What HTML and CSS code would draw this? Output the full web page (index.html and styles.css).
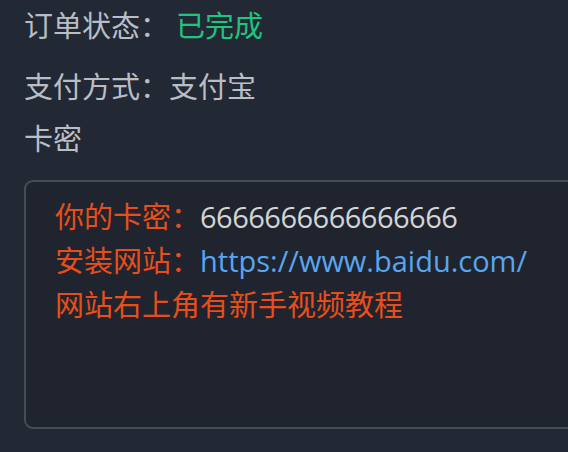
FILE: index.html
```html
<!DOCTYPE html>
<html lang="zh-CN">
<head>
<meta charset="utf-8">
<title>订单详情</title>
<link rel="stylesheet" href="styles.css">
</head>
<body>
<div class="page">
  <div class="row row-status">
    <span class="label">订单状态：</span>
    <span class="tag-done">已完成</span>
  </div>
  <div class="row row-pay">
    <span class="label">支付方式：</span>
    <span class="value">支付宝</span>
  </div>
  <div class="row row-card">
    <span class="label">卡密</span>
  </div>
  <div class="card-box">
    <div class="line"><span class="warn">你的卡密：</span><span class="code">6666666666666666</span></div>
    <div class="line"><span class="warn">安装网站：</span><span class="link">https://www.baidu.com/</span></div>
    <div class="line"><span class="warn">网站右上角有新手视频教程</span></div>
  </div>
</div>
</body>
</html>
```

FILE: styles.css
```css
html, body {
  margin: 0;
  padding: 0;
  background: #232934;
  overflow: hidden;
}

.page {
  padding: 4px 0 0 24px;
  font-family: "Open Sans", "Noto Sans CJK SC", sans-serif;
  font-size: 29px;
  line-height: 44px;
  color: #b9bec6;
  width: 600px;
}

.row {
  display: flex;
  align-items: center;
  height: 44px;
  white-space: nowrap;
}

.row-pay {
  margin-top: 17px;
}

.row-card {
  margin-top: 8px;
}

.label {
  color: #b9bec6;
}

.tag-done {
  color: #1fc47f;
  margin-left: 7px;
}

.value {
  color: #b9bec6;
}

.card-box {
  margin-top: 19px;
  box-sizing: border-box;
  width: 580px;
  height: 249px;
  border: 2px solid #474d58;
  border-radius: 9px;
  background: #20242e;
  padding: 13px 0 0 29px;
}

.line {
  height: 44px;
  white-space: nowrap;
}

.warn {
  color: #e84e1b;
}

.code {
  color: #d4d4d4;
  letter-spacing: -0.5px;
}

.link {
  color: #58a6f0;
}
```
